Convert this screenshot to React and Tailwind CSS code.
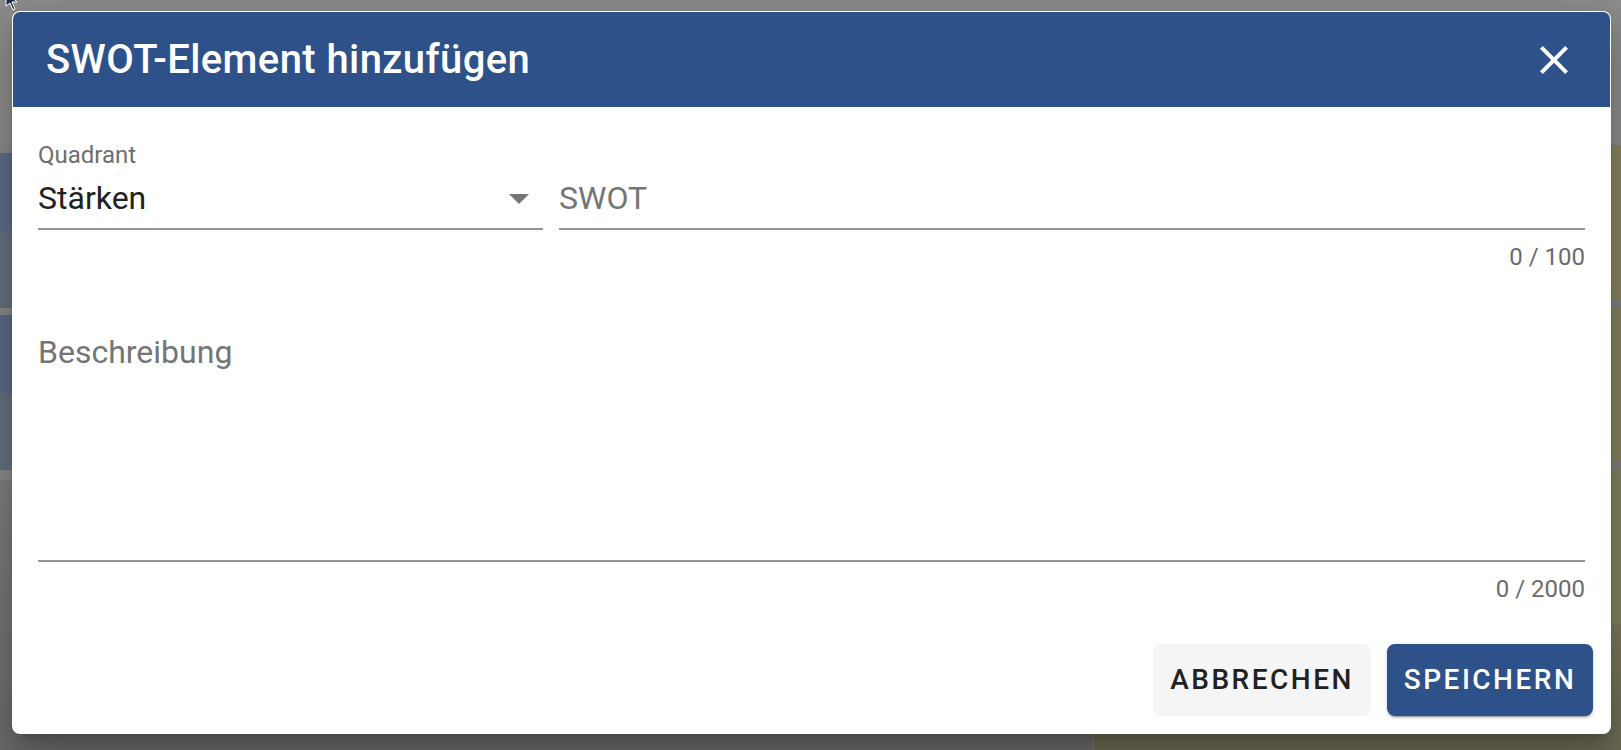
import { useState } from 'react';

function CloseIcon() {
  return (
    <svg viewBox="0 0 24 24" className="h-[48px] w-[48px]" fill="#ffffff">
      <path d="M19 6.41L17.59 5 12 10.59 6.41 5 5 6.41 10.59 12 5 17.59 6.41 19 12 13.41 17.59 19 19 17.59 13.41 12z" />
    </svg>
  );
}

function ArrowDropDown() {
  return (
    <svg viewBox="0 0 24 24" className="h-[48px] w-[48px] shrink-0" fill="#757575">
      <path d="M7 10l5 5 5-5z" />
    </svg>
  );
}

function BackgroundPage() {
  return (
    <div className="flex h-full flex-col">
      <div className="h-[145px] shrink-0 bg-[#8d8d8d]" />
      <div className="flex flex-1">
        <div className="flex w-[1092px] flex-col bg-[#8a8a8a]">
          <div className="h-[8px]" />
          <div className="flex h-[155px] flex-col">
            <div className="flex-1 bg-[#5d6d86]" />
            <div className="flex-1 bg-[#66717f]" />
          </div>
          <div className="h-[7px]" />
          <div className="flex h-[155px] flex-col">
            <div className="flex-1 bg-[#5b6b86]" />
            <div className="flex-1 bg-[#66717f]" />
          </div>
          <div className="h-[10px]" />
          <div className="flex-1 bg-gradient-to-b from-[#7f7f7f] to-[#6b6b6b]" />
        </div>
        <div className="w-[2px] bg-[#737373]" />
        <div className="flex flex-1 flex-col bg-[#7f7f7f]">
          <div className="h-[155px] bg-[#8a8462]" />
          <div className="h-[7px]" />
          <div className="h-[155px] bg-[#858060]" />
          <div className="h-[7px]" />
          <div className="h-[155px] bg-[#838060]" />
          <div className="flex-1 bg-gradient-to-b from-[#7c7859] to-[#6d6a55]" />
        </div>
      </div>
    </div>
  );
}

export default function App() {
  const [quadrant] = useState('Stärken');
  const [title, setTitle] = useState('');
  const [desc, setDesc] = useState('');

  return (
    <div className="relative h-[750px] w-full overflow-hidden font-['Roboto',sans-serif]">
      <BackgroundPage />

      {/* dialog */}
      <div className="absolute left-[12px] top-[11px] flex w-[1599px] flex-col rounded-[8px] bg-white p-px shadow-[0_11px_15px_-7px_rgba(0,0,0,0.2),0_24px_38px_3px_rgba(0,0,0,0.14),0_9px_46px_8px_rgba(0,0,0,0.12)]">
        <div className="flex h-[95px] items-center justify-between rounded-t-[7px] bg-[#2e5189] pl-[33px] pr-[32px]">
          <h2 className="text-[40px] font-medium leading-[64px] tracking-[0.4px] text-white">SWOT-Element hinzufügen</h2>
          <button className="flex items-center justify-center">
            <CloseIcon />
          </button>
        </div>

        <div className="flex flex-col px-[25px] pt-[36px]">
          <div className="flex gap-[16px]">
            <div className="flex w-[505px] flex-col">
              <div className="h-[24px] text-[24px] leading-[24px] text-[#6e6e6e]">Quadrant</div>
              <div className="flex h-[63px] items-center justify-between border-b-2 border-[#949494]">
                <span className="text-[32px] leading-[48px] text-[#212121]">{quadrant}</span>
                <ArrowDropDown />
              </div>
            </div>
            <div className="flex flex-1 flex-col">
              <div className="h-[24px]" />
              <div className="flex h-[63px] items-center border-b-2 border-[#949494]">
                <input
                  value={title}
                  onChange={(e) => setTitle(e.target.value)}
                  placeholder="SWOT"
                  className="w-full bg-transparent text-[32px] leading-[48px] text-[#212121] outline-none placeholder:text-[#757575]"
                />
              </div>
            </div>
          </div>
          <div className="mt-[15px] h-[24px] text-right text-[24px] leading-[24px] text-[#6b6b6b]">{title.length} / 100</div>

          <div className="mt-[31px] flex h-[262px] border-b-2 border-[#949494] pt-[28px]">
            <textarea
              value={desc}
              onChange={(e) => setDesc(e.target.value)}
              placeholder="Beschreibung"
              className="h-full w-full resize-none bg-transparent text-[32px] leading-[48px] text-[#212121] outline-none placeholder:text-[#757575]"
            />
          </div>
          <div className="mt-[15px] h-[24px] text-right text-[24px] leading-[24px] text-[#6b6b6b]">{desc.length} / 2000</div>
        </div>

        <div className="mt-[43px] flex justify-end gap-[16px] px-[17px] pb-[17px]">
          <button className="flex h-[72px] w-[218px] items-center justify-center rounded-[8px] bg-[#f5f5f5] text-[28px] font-medium uppercase tracking-[2.5px] text-[#212121]">
            Abbrechen
          </button>
          <button className="flex h-[72px] w-[206px] items-center justify-center rounded-[8px] bg-[#2e5189] text-[28px] font-medium uppercase tracking-[2.5px] text-white shadow-[0_3px_1px_-2px_rgba(0,0,0,0.2),0_2px_2px_0_rgba(0,0,0,0.14),0_1px_5px_0_rgba(0,0,0,0.12)]">
            Speichern
          </button>
        </div>
      </div>

      {/* mouse pointer */}
      <svg viewBox="0 0 20 12" className="absolute left-[4px] top-0 h-[12px] w-[20px]">
        <path d="M2 -8 L2 6 L6 3 L9 10 L11 9 L8 2 L13 2 Z" fill="#1c2a50" stroke="#ffffff" strokeWidth="1" />
      </svg>
    </div>
  );
}
